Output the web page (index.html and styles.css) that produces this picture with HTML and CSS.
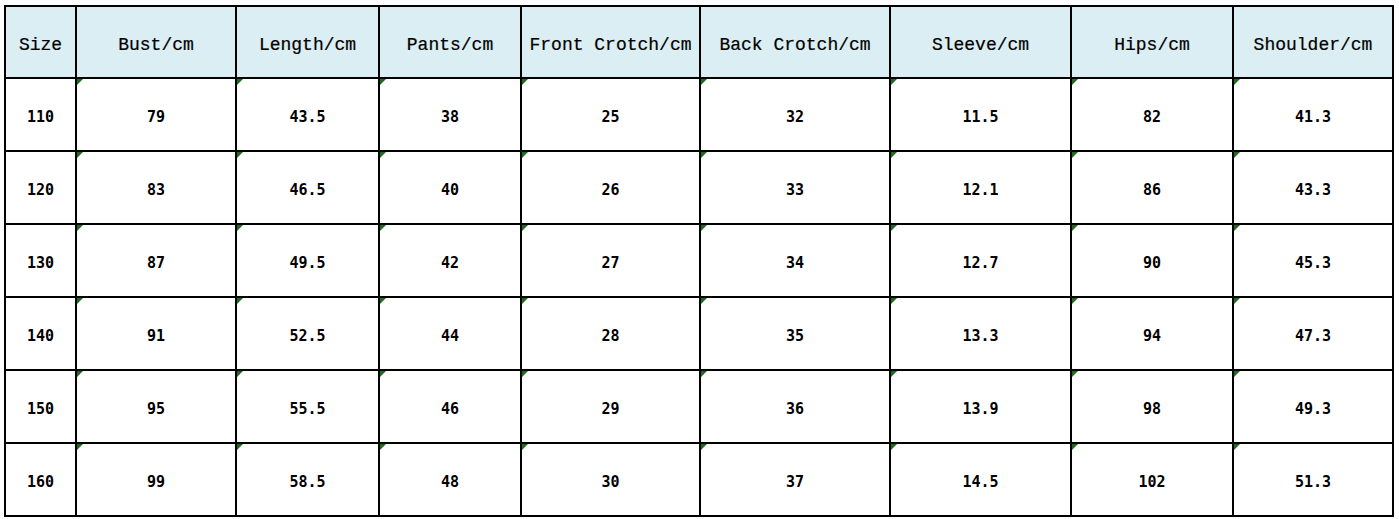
FILE: index.html
```html
<!DOCTYPE html>
<html>
<head>
<meta charset="utf-8">
<link rel="stylesheet" href="styles.css">
</head>
<body>
<div class="sheet">
<table class="size-table">
  <colgroup>
    <col class="c1"><col class="c2"><col class="c3"><col class="c4"><col class="c5"><col class="c6"><col class="c7"><col class="c8"><col class="c9">
  </colgroup>
  <thead>
    <tr>
      <th>Size</th><th>Bust/cm</th><th>Length/cm</th><th>Pants/cm</th><th>Front Crotch/cm</th><th>Back Crotch/cm</th><th>Sleeve/cm</th><th>Hips/cm</th><th>Shoulder/cm</th>
    </tr>
  </thead>
  <tbody>
    <tr><td>110</td><td class="t">79</td><td class="t">43.5</td><td class="t">38</td><td class="t">25</td><td class="t">32</td><td class="t">11.5</td><td class="t">82</td><td class="t">41.3</td></tr>
    <tr><td>120</td><td class="t">83</td><td class="t">46.5</td><td class="t">40</td><td class="t">26</td><td class="t">33</td><td class="t">12.1</td><td class="t">86</td><td class="t">43.3</td></tr>
    <tr><td>130</td><td class="t">87</td><td class="t">49.5</td><td class="t">42</td><td class="t">27</td><td class="t">34</td><td class="t">12.7</td><td class="t">90</td><td class="t">45.3</td></tr>
    <tr><td>140</td><td class="t">91</td><td class="t">52.5</td><td class="t">44</td><td class="t">28</td><td class="t">35</td><td class="t">13.3</td><td class="t">94</td><td class="t">47.3</td></tr>
    <tr><td>150</td><td class="t">95</td><td class="t">55.5</td><td class="t">46</td><td class="t">29</td><td class="t">36</td><td class="t">13.9</td><td class="t">98</td><td class="t">49.3</td></tr>
    <tr><td>160</td><td class="t">99</td><td class="t">58.5</td><td class="t">48</td><td class="t">30</td><td class="t">37</td><td class="t">14.5</td><td class="t">102</td><td class="t">51.3</td></tr>
  </tbody>
</table>
</div>
</body>
</html>
```

FILE: styles.css
```css
html, body {
  margin: 0;
  padding: 0;
  background: #ffffff;
}

.sheet {
  padding: 5px 0 0 4px;
}

.size-table {
  border-collapse: collapse;
  table-layout: fixed;
  width: 1390px;
  font-family: "Liberation Mono", "DejaVu Sans Mono", monospace;
  color: #000;
}

.c1 { width: 71px; }
.c2 { width: 160px; }
.c3 { width: 143px; }
.c4 { width: 142px; }
.c5 { width: 179px; }
.c6 { width: 190px; }
.c7 { width: 181px; }
.c8 { width: 162px; }
.c9 { width: 160px; }

.size-table th,
.size-table td {
  border: 2px solid #000;
  text-align: center;
  vertical-align: middle;
  padding: 0;
  white-space: nowrap;
  box-sizing: border-box;
}

.size-table th {
  height: 72px;
  padding-top: 5px;
  background: #daeef3;
  font-weight: normal;
  font-size: 18px;
  -webkit-text-stroke: 0.2px #000;
}

.size-table td {
  height: 73px;
  padding-top: 5px;
  font-size: 15px;
  font-weight: bold;
  font-family: "DejaVu Sans Mono", "Liberation Mono", monospace;
}

.size-table td.t {
  position: relative;
}

.size-table td.t::before {
  content: "";
  position: absolute;
  top: 0;
  left: 0;
  width: 0;
  height: 0;
  border-top: 6px solid #1f6b1f;
  border-right: 6px solid transparent;
}
```
